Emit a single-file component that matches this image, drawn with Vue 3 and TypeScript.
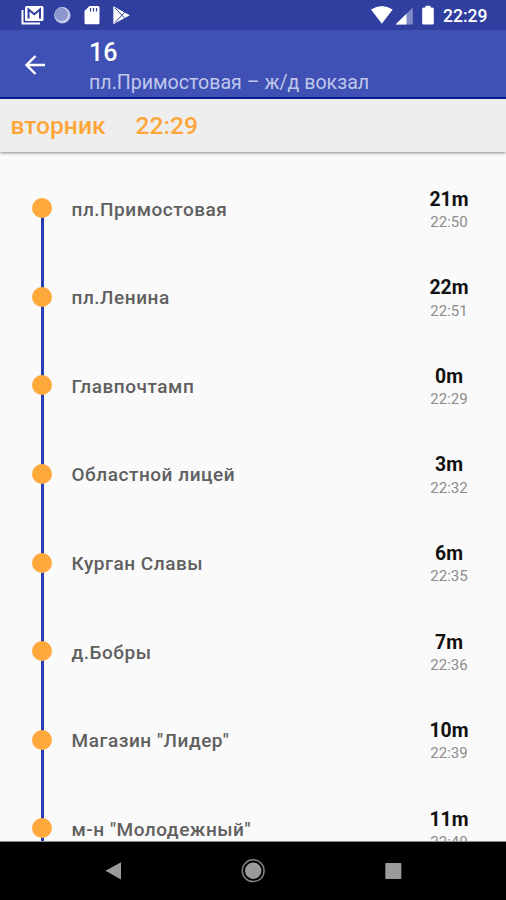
<script setup lang="ts">
interface Stop {
  name: string
  wait: string
  time: string
}

const stops: Stop[] = [
  { name: 'пл.Примостовая', wait: '21m', time: '22:50' },
  { name: 'пл.Ленина', wait: '22m', time: '22:51' },
  { name: 'Главпочтамп', wait: '0m', time: '22:29' },
  { name: 'Областной лицей', wait: '3m', time: '22:32' },
  { name: 'Курган Славы', wait: '6m', time: '22:35' },
  { name: 'д.Бобры', wait: '7m', time: '22:36' },
  { name: 'Магазин "Лидер"', wait: '10m', time: '22:39' },
  { name: 'м-н "Молодежный"', wait: '11m', time: '22:40' },
]
</script>

<template>
  <div class="screen">
    <div class="status">
      <svg class="notifications" width="140" height="30" viewBox="0 0 140 30">
        <path d="M22.500 10v13.500h17.500" fill="none" stroke="#fff" stroke-width="2" />
        <rect x="25" y="6" width="18.500" height="15" rx="1.500" fill="#fff" />
        <path d="M28.500 18.500V9.500l5.800 4.800 5.700-4.800v9" fill="none" stroke="#303f9f" stroke-width="2" />
        <circle cx="62.300" cy="15.200" r="8.200" fill="#c5cae9" />
        <circle cx="61.300" cy="14.300" r="6.600" fill="#8d97cd" />
        <path d="M89.500 6H98a1.500 1.500 0 0 1 1.500 1.500v15.200a1.500 1.500 0 0 1-1.500 1.500H86a1.500 1.500 0 0 1-1.500-1.500V11z" fill="#fff" />
        <path d="M90.500 8v3.500M93.500 8v3.500M96.500 8v3.500" stroke="#303f9f" stroke-width="1.200" />
        <path d="M113.300 6.200v18l16.500-9z" fill="#fff" />
        <path d="M115 8l10 10.500M115 22.500l10-10.500" stroke="#303f9f" stroke-width="1" />
      </svg>
      <div class="system">
        <svg width="66" height="30" viewBox="0 0 66 30">
          <path d="M1 9.500Q11.800 2.500 22.700 9.500L11.800 23.800z" fill="#fff" />
          <path d="M42.800 7.500v17H25.500z" fill="#7f8ac7" />
          <path d="M36.500 13.700v10.800h-11z" fill="#fff" />
          <path d="M55.500 7.500V5.700h5v1.800h1.800a1.500 1.500 0 0 1 1.500 1.500v14a1.500 1.500 0 0 1-1.500 1.500h-8.600a1.500 1.500 0 0 1-1.500-1.500V9a1.500 1.500 0 0 1 1.500-1.500z" fill="#fff" />
        </svg>
        <span class="clock">22:29</span>
      </div>
    </div>
    <header class="toolbar">
      <svg class="back" width="22" height="22" viewBox="0 0 22 22">
        <path d="M21 11H3M11.500 2L2.500 11l9 9" fill="none" stroke="#fff" stroke-width="2.400" />
      </svg>
      <div class="titles">
        <h1>16</h1>
        <p>пл.Примостовая – ж/д вокзал</p>
      </div>
    </header>
    <div class="now">
      <span class="day">вторник</span>
      <span>22:29</span>
    </div>
    <main class="list">
      <div v-for="stop in stops" :key="stop.name" class="stop">
        <div class="track"><i class="dot"></i></div>
        <span class="name">{{ stop.name }}</span>
        <div class="arrival">
          <b>{{ stop.wait }}</b>
          <small>{{ stop.time }}</small>
        </div>
      </div>
    </main>
    <nav class="nav">
      <svg width="506" height="58" viewBox="0 0 506 58">
        <path d="M105.500 28.800l15.500-8.600v17.300z" fill="#9b9b9b" />
        <circle cx="253.200" cy="28.700" r="10.900" fill="none" stroke="#858585" stroke-width="1.500" />
        <circle cx="253.200" cy="28.700" r="8.200" fill="#9b9b9b" />
        <rect x="385.300" y="21" width="16" height="16" rx="0.800" fill="#9b9b9b" />
      </svg>
    </nav>
  </div>
</template>

<style>
body {
  margin: 0;
}
</style>

<style scoped>
.screen {
  width: 506px;
  height: 900px;
  overflow: hidden;
  display: flex;
  flex-direction: column;
  background: #fafafa;
  font-family: Roboto, "Liberation Sans", sans-serif;
}
.status {
  height: 30px;
  flex: none;
  display: flex;
  justify-content: space-between;
  background: #303f9f;
}
.system {
  display: flex;
  padding-right: 19px;
  gap: 7px;
}
.clock {
  color: #fff;
  font-size: 17.500px;
  font-weight: 500;
  line-height: 32px;
  width: 44px;
  white-space: nowrap;
}
.toolbar {
  height: 69px;
  box-sizing: border-box;
  flex: none;
  display: flex;
  background: #3f51b5;
  border-bottom: 2px solid #0c1a98;
  color: #fff;
}
.back {
  margin: 24px 0 0 24px;
}
.titles {
  margin-left: 43px;
  padding-top: 7px;
}
h1 {
  margin: 0;
  font-size: 25px;
  line-height: 31px;
  font-weight: 500;
}
p {
  margin: 0;
  font-size: 19.600px;
  line-height: 30px;
  color: #c0c7eb;
}
.now {
  height: 53px;
  flex: none;
  display: flex;
  box-sizing: border-box;
  padding-left: 10.500px;
  background: #eee;
  box-shadow: 0 1px 3px rgba(0, 0, 0, 0.45);
  color: #ffa63a;
  font-size: 24.600px;
  line-height: 54px;
  font-weight: 500;
}
.day {
  width: 125px;
}
.list {
  flex: 1;
  min-height: 0;
  overflow: hidden;
  padding-top: 12px;
  border-bottom: 1px solid #8a8a8a;
}
.stop {
  height: 88.570px;
  display: flex;
}
.track {
  width: 20px;
  margin: 0 0 -1px 32px;
  padding-top: 34.300px;
  background: linear-gradient(#263db3, #263db3) center / 3px 100% no-repeat;
}
.stop:first-child .track {
  background-position: center 44px;
}
.dot {
  display: block;
  width: 20px;
  height: 20px;
  border-radius: 50%;
  background: #ffa93c;
}
.name {
  flex: 1;
  margin-left: 19.500px;
  padding-top: 33.700px;
  font-size: 19px;
  letter-spacing: 0.530px;
  line-height: 24px;
  font-weight: 500;
  color: #606060;
}
.arrival {
  width: 60px;
  margin-right: 27px;
  padding-top: 23.700px;
  display: flex;
  flex-direction: column;
  text-align: center;
}
b {
  font-size: 19.400px;
  line-height: 24px;
  font-weight: 700;
  color: #111;
}
small {
  margin-top: -0.700px;
  font-size: 15px;
  line-height: 22px;
  color: #8c8c8c;
}
.nav {
  height: 58px;
  flex: none;
  background: #000;
}
</style>
